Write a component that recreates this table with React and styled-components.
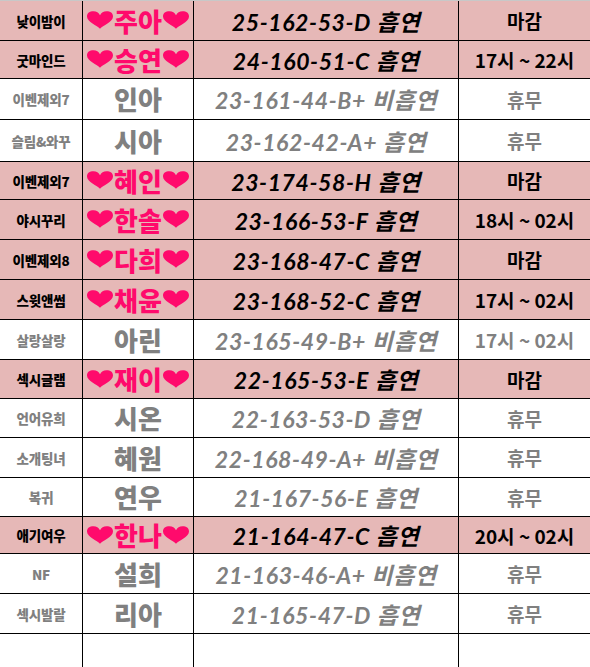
import React from "react";
import styled, { createGlobalStyle } from "styled-components";

const Global = createGlobalStyle`
  html, body { margin: 0; padding: 0; background: #fff; }
  body { font-family: "Noto Sans CJK KR", "Noto Sans", sans-serif; }
`;

const PINK_BG = "#e6b8b7";
const HOT = "#ff0a6c";
const GRAY = "#808080";

const Table = styled.div`
  width: 590px;
  height: 667px;
  overflow: hidden;
  border-top: 1px solid #c8c8c8;
  box-sizing: border-box;
`;

const Row = styled.div`
  display: grid;
  grid-template-columns: 83px 111px 265px 131px;
  height: ${(p) => p.$h}px;
  box-sizing: border-box;
  border-bottom: ${(p) => (p.$last ? "none" : "1.5px solid #000")};
  background: ${(p) => (p.$pink ? PINK_BG : "#fff")};
  color: ${(p) => (p.$pink ? "#000" : GRAY)};
`;

const Cell = styled.div`
  display: flex;
  align-items: center;
  justify-content: center;
  white-space: nowrap;
  overflow: hidden;
  border-right: ${(p) => (p.$end ? "none" : "1.5px solid #000")};
  box-sizing: border-box;
`;

const Shop = styled(Cell)`
  font-size: 13.5px;
  font-weight: 900;
  letter-spacing: -0.2px;
`;

const Name = styled(Cell)`
  font-size: 26px;
  font-weight: 900;
  color: ${(p) => (p.$pink ? HOT : GRAY)};
  gap: 1px;
  padding-bottom: 1px;
`;

const Spec = styled(Cell)`
  font-family: Lato, "Noto Sans CJK KR", sans-serif;
  font-style: italic;
  font-weight: 700;
  font-size: 23px;
  letter-spacing: 0.6px;
`;

const Hours = styled(Cell)`
  font-size: 19px;
  font-weight: 700;
`;

const Heart = () => (
  <svg width="26" height="18" viewBox="0 0 30 20" style={{ flex: "none" }}>
    <path
      d="M15 20 C 12 16.5, 0 12.5, 0 6 C 0 2, 3 0, 7.5 0 C 11 0, 13.5 1.8, 15 4.5 C 16.5 1.8, 19 0, 22.5 0 C 27 0, 30 2, 30 6 C 30 12.5, 18 16.5, 15 20 Z"
      fill={HOT}
    />
  </svg>
);

const rows = [
  ["낮이밤이", "주아", "25-162-53-D 흡연", "마감", true, 40],
  ["굿마인드", "승연", "24-160-51-C 흡연", "17시 ~ 22시", true, 38],
  ["이벤제외7", "인아", "23-161-44-B+ 비흡연", "휴무", false, 41],
  ["슬림&와꾸", "시아", "23-162-42-A+ 흡연", "휴무", false, 42],
  ["이벤제외7", "혜인", "23-174-58-H 흡연", "마감", true, 38],
  ["야시꾸리", "한솔", "23-166-53-F 흡연", "18시 ~ 02시", true, 40],
  ["이벤제외8", "다희", "23-168-47-C 흡연", "마감", true, 40],
  ["스윗앤썸", "채윤", "23-168-52-C 흡연", "17시 ~ 02시", true, 40],
  ["살랑살랑", "아린", "23-165-49-B+ 비흡연", "17시 ~ 02시", false, 40],
  ["섹시글램", "재이", "22-165-53-E 흡연", "마감", true, 39],
  ["언어유희", "시온", "22-163-53-D 흡연", "휴무", false, 39],
  ["소개팅녀", "혜원", "22-168-49-A+ 비흡연", "휴무", false, 40],
  ["복귀", "연우", "21-167-56-E 흡연", "휴무", false, 39],
  ["애기여우", "한나", "21-164-47-C 흡연", "20시 ~ 02시", true, 37],
  ["NF", "설희", "21-163-46-A+ 비흡연", "휴무", false, 40],
  ["섹시발랄", "리아", "21-165-47-D 흡연", "휴무", false, 40],
];

export default function App() {
  return (
    <>
      <Global />
      <Table>
        {rows.map(([shop, name, spec, hours, pink, h], i) => (
          <Row key={i} $pink={pink} $h={h}>
            <Shop>{shop}</Shop>
            <Name $pink={pink}>
              {pink && <Heart />}
              <span>{name}</span>
              {pink && <Heart />}
            </Name>
            <Spec>{spec}</Spec>
            <Hours $end>{hours}</Hours>
          </Row>
        ))}
        <Row $h={40} $last>
          <Cell />
          <Cell />
          <Cell />
          <Cell $end />
        </Row>
      </Table>
    </>
  );
}
